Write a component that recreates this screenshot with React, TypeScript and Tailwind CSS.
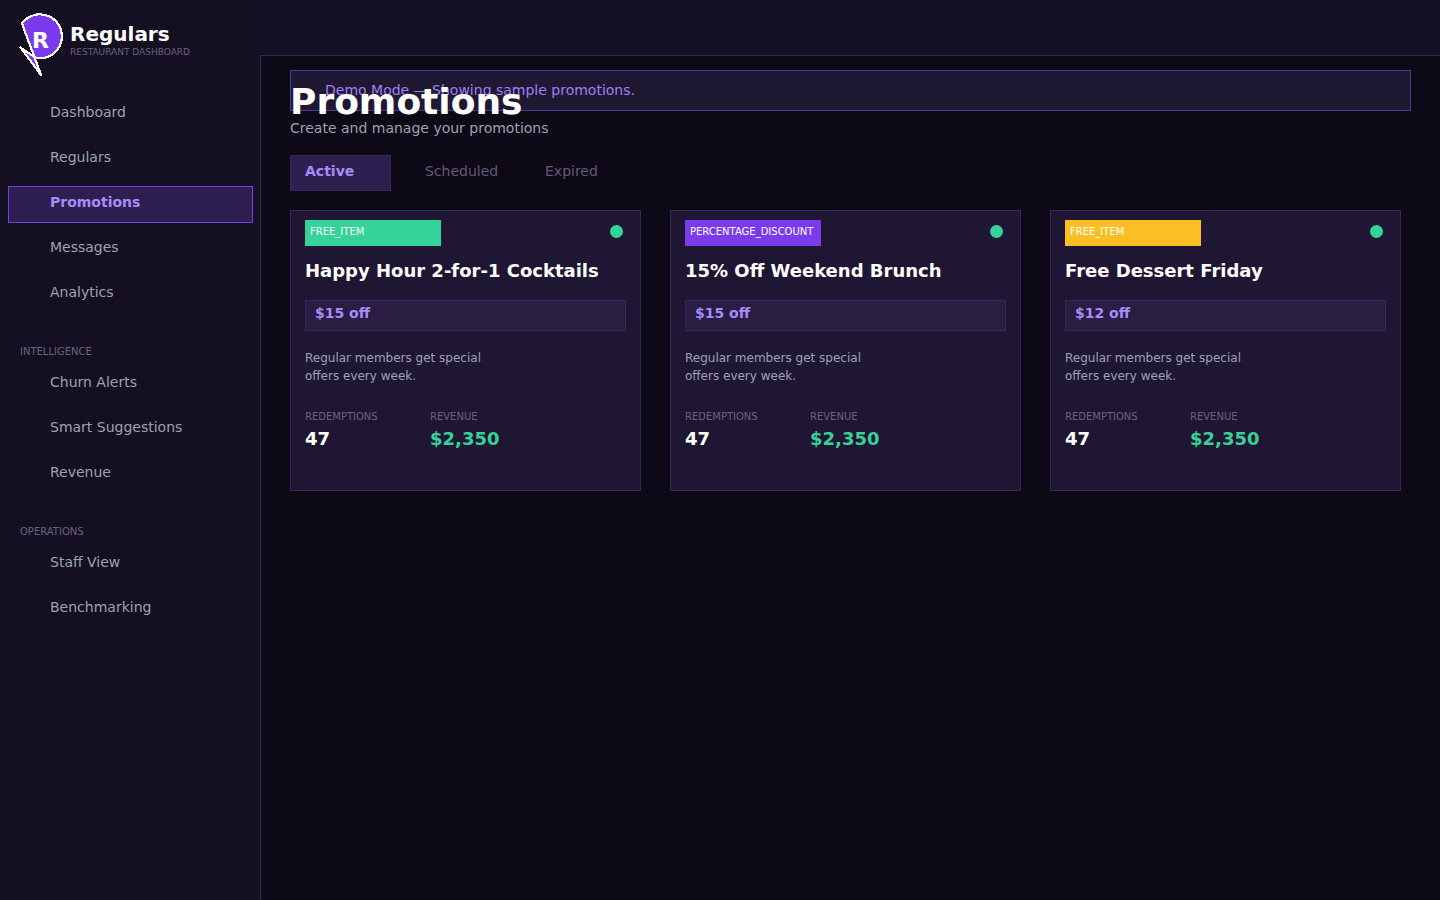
import { useState } from "react";

type NavGroup = { label?: string; items: string[] };

const navGroups: NavGroup[] = [
    { items: ["Dashboard", "Regulars", "Promotions", "Messages", "Analytics"] },
    { label: "INTELLIGENCE", items: ["Churn Alerts", "Smart Suggestions", "Revenue"] },
    { label: "OPERATIONS", items: ["Staff View", "Benchmarking"] },
];

const tabs = ["Active", "Scheduled", "Expired"];

const promotions = [
    { type: "FREE_ITEM", color: "bg-[#34d399]", title: "Happy Hour 2-for-1 Cocktails", value: "$15 off" },
    { type: "PERCENTAGE_DISCOUNT", color: "bg-[#7c3aed]", title: "15% Off Weekend Brunch", value: "$15 off" },
    { type: "FREE_ITEM", color: "bg-[#fbbf24]", title: "Free Dessert Friday", value: "$12 off" },
];

function Logo() {
    return (
        <svg className="h-[65px] w-[46px] shrink-0" viewBox="18 12 46 65" aria-hidden="true">
            <path
                d="M22 23.5 A22 22 0 1 1 36 58 L20.5 47.5 L41 75 Z"
                fill="#7c3aed"
                fillRule="nonzero"
                stroke="#fff"
                strokeWidth="2.2"
                strokeLinejoin="round"
                shapeRendering="crispEdges"
            />
            <text x="32" y="48" fill="#fff" fontSize="22" fontWeight="700">R</text>
        </svg>
    );
}

function Sidebar() {
    return (
        <aside className="w-[260px] shrink-0 bg-[#150f22]">
            <a href="#" className="flex gap-1.5 pt-3 pl-[18px]">
                <Logo />
                <div className="pt-2.5">
                    <div className="text-[20px] leading-6 font-bold text-white">Regulars</div>
                    <div className="text-[9px] leading-3 text-[#6b6280]">RESTAURANT DASHBOARD</div>
                </div>
            </a>
            <nav className="flex flex-col gap-2 pt-[19px] pr-[7px] pl-2">
                {navGroups.map((group, i) => (
                    <div key={i} className="flex flex-col gap-2">
                        {group.label && (
                            <h2 className="h-[37px] pt-[23px] pl-3 text-[10px] leading-4 text-[#6b6280]">{group.label}</h2>
                        )}
                        {group.items.map((item) => (
                            <a
                                key={item}
                                href="#"
                                className={
                                    item === "Promotions"
                                        ? "border border-[#7c3aed] bg-[#2d1f50] pt-[5px] pb-2.5 pl-[41px] text-[14px] leading-5 font-bold text-[#a78bfa]"
                                        : "border border-transparent pt-[5px] pb-2.5 pl-[41px] text-[14px] leading-5 text-[#9ca3af]"
                                }
                            >
                                {item}
                            </a>
                        ))}
                    </div>
                ))}
            </nav>
        </aside>
    );
}

function PromotionCard({ promo }: { promo: (typeof promotions)[number] }) {
    return (
        <article className="border border-[#36285a] bg-[#1f1633] px-3.5 pt-[9px] pb-[39px]">
            <div className="flex items-start justify-between pr-[3px]">
                <span className={`w-[136px] pt-1 pb-1.5 pl-[5px] text-[10px] leading-4 text-white ${promo.color}`}>
                    {promo.type}
                </span>
                <span className="mt-[5px] size-[13px] rounded-full bg-[#34d399]" />
            </div>
            <h2 className="mt-[13px] text-[18px] leading-6 font-bold text-white">{promo.title}</h2>
            <div className="mt-[17px] border border-[#36285a] bg-[#291e41] pt-0.5 pb-[7px] pl-[9px] text-[14px] leading-5 font-bold text-[#a78bfa]">
                {promo.value}
            </div>
            <p className="mt-[18px] max-w-[200px] text-[12px] leading-[18px] text-[#9ca3af]">
                Regular members get special offers every week.
            </p>
            <dl className="mt-6 flex">
                <div className="w-[125px]">
                    <dt className="text-[10px] leading-4 text-[#6b6280]">REDEMPTIONS</dt>
                    <dd className="mt-0.5 text-[18px] leading-6 font-bold text-white">47</dd>
                </div>
                <div>
                    <dt className="text-[10px] leading-4 text-[#6b6280]">REVENUE</dt>
                    <dd className="mt-0.5 text-[18px] leading-6 font-bold text-[#34d399]">$2,350</dd>
                </div>
            </dl>
        </article>
    );
}

function App() {
    const [activeTab, setActiveTab] = useState("Active");

    return (
        <div className="flex min-h-screen bg-[#0d0916] font-['DejaVu_Sans',sans-serif]">
            <Sidebar />
            <div className="flex min-w-0 flex-1 flex-col">
                <header className="h-14 border-b border-[#36285a] bg-[#161024]" />
                <main className="flex-1 border-l border-[#36285a] px-[29px] pt-3.5">
                    {/* Demo banner, the page title runs over its lower edge */}
                    <div className="border border-[#4c3a92] bg-[#1f1833] pt-[9px] pb-2.5 pl-[34px] text-[14px] leading-5 text-[#a07ff2]">
                        Demo Mode — Showing sample promotions.
                    </div>
                    <h1 className="relative -mt-[25px] text-[36px] leading-8 font-bold text-white">Promotions</h1>
                    <p className="text-[14px] leading-5 text-[#9ca3af]">Create and manage your promotions</p>

                    {/* Tabs */}
                    <div className="mt-[17px] flex gap-[19px]">
                        {tabs.map((tab) => (
                            <button
                                key={tab}
                                onClick={() => setActiveTab(tab)}
                                className={
                                    tab === activeTab
                                        ? "w-[101px] border border-[#36285a] bg-[#2d1f50] pt-[5px] pb-[9px] pl-3.5 text-left text-[14px] leading-5 font-bold text-[#a78bfa]"
                                        : "w-[101px] border border-transparent pt-[5px] pb-[9px] pl-3.5 text-left text-[14px] leading-5 text-[#645a78]"
                                }
                            >
                                {tab}
                            </button>
                        ))}
                    </div>

                    {/* Promotion cards */}
                    <div className="mt-[19px] mr-2.5 grid grid-cols-3 gap-[29px]">
                        {promotions.map((promo) => (
                            <PromotionCard key={promo.title} promo={promo} />
                        ))}
                    </div>
                </main>
            </div>
        </div>
    );
}

export default App;
